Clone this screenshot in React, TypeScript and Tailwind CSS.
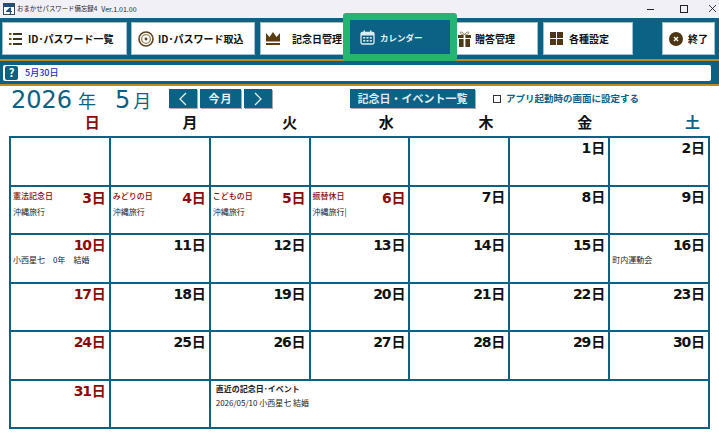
import React from "react";

const JP = { fontFamily: '"Noto Sans CJK JP", sans-serif' };

function ListIcon() {
  return (
    <svg width="13" height="12" viewBox="0 0 13 12">
      <g fill="#6b5220">
        <rect x="0" y="0" width="2.5" height="2" />
        <rect x="0" y="5" width="2.5" height="2" />
        <rect x="0" y="10" width="2.5" height="2" />
      </g>
      <g fill="#3a3420">
        <rect x="4" y="0" width="9" height="2" />
        <rect x="4" y="5" width="9" height="2" />
        <rect x="4" y="10" width="9" height="2" />
      </g>
    </svg>
  );
}
function DiscIcon() {
  return (
    <svg width="16" height="16" viewBox="0 0 16 16" fill="none">
      <circle cx="8" cy="8" r="7" stroke="#5a4320" strokeWidth="1.6" />
      <circle cx="8" cy="8" r="4.4" stroke="#a08a5a" strokeWidth="1.4" />
      <circle cx="8" cy="8" r="1.4" fill="#5a4320" />
    </svg>
  );
}
function CrownIcon() {
  return (
    <svg width="14" height="13" viewBox="0 0 14 13">
      <path d="M0 1 L3.5 5 L7 0 L10.5 5 L14 1 V9.5 H0 Z" fill="#5a3e10" />
      <rect x="0" y="11" width="14" height="2" fill="#5a3e10" />
    </svg>
  );
}
function CalendarIcon() {
  return (
    <svg width="15" height="15" viewBox="0 0 15 15" fill="none">
      <rect x="1" y="2.5" width="13" height="11.5" rx="1.5" stroke="#dcecf2" strokeWidth="1.3" />
      <rect x="1" y="2.5" width="13" height="3" fill="#dcecf2" />
      <rect x="3.5" y="0.5" width="1.5" height="3" fill="#dcecf2" />
      <rect x="10" y="0.5" width="1.5" height="3" fill="#dcecf2" />
      <g fill="#dcecf2">
        <rect x="3.2" y="7" width="2" height="1.6" />
        <rect x="6.5" y="7" width="2" height="1.6" />
        <rect x="9.8" y="7" width="2" height="1.6" />
        <rect x="3.2" y="10" width="2" height="1.6" />
        <rect x="6.5" y="10" width="2" height="1.6" />
        <rect x="9.8" y="10" width="2" height="1.6" />
      </g>
    </svg>
  );
}
function GiftIcon() {
  return (
    <svg width="13" height="16" viewBox="0 0 13 16" fill="none">
      <path d="M6.5 3.5 C4 0 1.5 0.5 2.5 2.5 C3 3.3 5 3.5 6.5 3.5 C8 3.5 10 3.3 10.5 2.5 C11.5 0.5 9 0 6.5 3.5 Z" stroke="#8a7a5a" strokeWidth="0.9" />
      <rect x="0" y="4" width="13" height="3" fill="#4d3a18" />
      <rect x="1" y="8" width="11" height="8" fill="#4d3a18" />
      <rect x="5.6" y="4" width="1.8" height="12" fill="#fff" />
    </svg>
  );
}
function GridIcon() {
  return (
    <svg width="13" height="13" viewBox="0 0 13 13" fill="#4d3614">
      <rect x="0" y="0" width="6" height="6" />
      <rect x="7" y="0" width="6" height="6" />
      <rect x="0" y="7" width="6" height="6" />
      <rect x="7" y="7" width="6" height="6" />
    </svg>
  );
}
function CloseIcon() {
  return (
    <svg width="14" height="14" viewBox="0 0 14 14">
      <circle cx="7" cy="7" r="7" fill="#4d3614" />
      <path d="M5 5 L9 9 M9 5 L5 9" stroke="#fff" strokeWidth="1.4" />
    </svg>
  );
}
function AppIcon() {
  return (
    <svg width="12" height="12" viewBox="0 0 12 12">
      <rect x="0.5" y="0.5" width="11" height="11" fill="#fff" stroke="#33485c" />
      <rect x="1" y="1" width="10" height="3" fill="#1d4f80" />
      <path d="M6.8 4.5 L3 8.2 V9 H6.8 V11 H8 V9 H9 V8 H8 V4.5 Z" fill="#1d4f80" />
    </svg>
  );
}

function ToolButton({ w, ml, pl, gap, icon, label }: { w: string; ml: string; pl: string; gap: string; icon: React.ReactNode; label: string }) {
  return (
    <div className={`${w} ${ml} ${pl} ${gap} h-[33px] flex items-center bg-white border border-[#9fc0cf] text-[10px] text-[#111] font-bold whitespace-nowrap`}>
      {icon}
      <span>{label}</span>
    </div>
  );
}

type Cell = { day?: number; color?: string; holiday?: string; note?: string };

const RED = "text-[#8b0a0a]";
const BLK = "text-[#111]";

const rows: Cell[][] = [
  [{}, {}, {}, {}, {}, { day: 1, color: BLK }, { day: 2, color: BLK }],
  [
    { day: 3, color: RED, holiday: "憲法記念日", note: "沖縄旅行" },
    { day: 4, color: RED, holiday: "みどりの日", note: "沖縄旅行" },
    { day: 5, color: RED, holiday: "こどもの日", note: "沖縄旅行" },
    { day: 6, color: RED, holiday: "振替休日", note: "沖縄旅行|" },
    { day: 7, color: BLK },
    { day: 8, color: BLK },
    { day: 9, color: BLK },
  ],
  [
    { day: 10, color: RED, note: "小西星七　0年　結婚" },
    { day: 11, color: BLK },
    { day: 12, color: BLK },
    { day: 13, color: BLK },
    { day: 14, color: BLK },
    { day: 15, color: BLK },
    { day: 16, color: BLK, note: "町内運動会" },
  ],
  [17, 18, 19, 20, 21, 22, 23].map((d, i) => ({ day: d, color: i === 0 ? RED : BLK })),
  [24, 25, 26, 27, 28, 29, 30].map((d, i) => ({ day: d, color: i === 0 ? RED : BLK })),
];

function DayNumber({ day, color }: { day: number; color: string }) {
  return (
    <div
      className={`text-right pr-[3px] font-bold text-[14px] tracking-[-1.2px] leading-[18px] ${color}`}
      style={{ fontFamily: '"DejaVu Sans", "Noto Sans CJK JP", sans-serif' }}
    >
      {day}
      <span className="text-[14px] tracking-normal ml-[1px]" style={JP}>日</span>
    </div>
  );
}

function DayCell({ cell }: { cell: Cell }) {
  const holidayFirst = !!cell.holiday;
  return (
    <div className="bg-white min-w-0 overflow-hidden">
      {holidayFirst ? (
        <div className="flex items-center justify-between pl-[2px] h-[21px]">
          <span className="text-[8px] font-medium text-[#8b0a0a] whitespace-nowrap -mt-[2px]">{cell.holiday}</span>
          <DayNumber day={cell.day!} color={cell.color!} />
        </div>
      ) : (
        cell.day && <DayNumber day={cell.day} color={cell.color!} />
      )}
      {cell.note && (
        <div className={`pl-[2px] text-[8px] text-[#222] whitespace-nowrap leading-[12px] ${holidayFirst ? "-mt-[2px]" : "mt-0"}`}>{cell.note}</div>
      )}
    </div>
  );
}

export default function App() {
  return (
    <div className="w-[719px] h-[436px] bg-white overflow-hidden relative" style={JP}>
      {/* Title bar */}
      <div className="h-[18px] bg-[#f1f0f6] flex items-center pl-[3px] text-[#222]">
        <AppIcon />
        <span className="ml-[2px] text-[6.4px] whitespace-nowrap">おまかせパスワード備忘録4</span>
        <span className="ml-[4px] text-[7px] whitespace-nowrap">Ver.1.01.00</span>
        <div className="ml-auto flex items-center">
          <svg width="110" height="14" viewBox="0 0 110 14" fill="none" stroke="#222">
            <path d="M38 7.5 H45" strokeWidth="1" />
            <rect x="71.5" y="3.5" width="7" height="7" strokeWidth="1" />
            <path d="M100 3 L107 10 M107 3 L100 10" strokeWidth="0.9" />
          </svg>
        </div>
      </div>

      {/* Toolbar */}
      <div className="h-[41px] bg-[#0b6285] flex items-start pt-[4px] pl-[2px] relative">
        <ToolButton w="w-[125px]" ml="ml-0" pl="pl-[6px]" gap="gap-[6px]" icon={<ListIcon />} label="ID･パスワード一覧" />
        <ToolButton w="w-[124px]" ml="ml-[4px]" pl="pl-[6px]" gap="gap-[4px]" icon={<DiscIcon />} label="ID･パスワード取込" />
        <ToolButton w="w-[90px]" ml="ml-[5px]" pl="pl-[5px]" gap="gap-[12px]" icon={<CrownIcon />} label="記念日管理" />
        <div className="relative z-10 -ml-[7px] -mt-[9px] w-[114px] h-[48px] bg-[#0b6285] border-[7px] border-[#25b573] rounded-[3px] flex items-center pl-[10px] gap-[5px] text-[8.5px] font-bold text-[#e6f2f6] whitespace-nowrap">
          <CalendarIcon />
          <span>カレンダー</span>
        </div>
        <ToolButton w="w-[88px]" ml="-ml-[7px]" pl="pl-[7px]" gap="gap-[4px]" icon={<GiftIcon />} label="贈答管理" />
        <ToolButton w="w-[90px]" ml="ml-[5px]" pl="pl-[6px]" gap="gap-[6px]" icon={<GridIcon />} label="各種設定" />
        <ToolButton w="w-[53px]" ml="ml-[29px]" pl="pl-[6px]" gap="gap-[5px]" icon={<CloseIcon />} label="終了" />
      </div>

      {/* Message bar */}
      <div className="h-[27px] bg-[#0b6285] border-t-2 border-b-2 border-[#c08a1c] flex items-center pl-[3px] pr-[8px]">
        <div className="flex-1 h-[16px] bg-white rounded-[2px] flex items-center">
          <div className="w-[13px] h-[14px] bg-[#0b6285] rounded-[2px] ml-[2px] flex items-center justify-center text-white text-[11px] font-bold leading-none">?</div>
          <span className="ml-[7px] text-[9px] font-medium text-[#2a1ee0]">5月30日</span>
        </div>
      </div>

      {/* Month row */}
      <div className="h-[28px] flex items-center pl-[11px] pb-[3px] text-[#0b6285]">
        <span className="text-[24px] leading-none whitespace-nowrap w-[158px] pt-[2px]" style={{ fontFamily: '"DejaVu Sans", "Noto Sans CJK JP", sans-serif' }}>
          2026<span className="text-[18px] ml-[6px]" style={JP}>年</span>
          <span className="ml-[19px]">5</span><span className="text-[18px] ml-[3px]" style={JP}>月</span>
        </span>
        <div className="flex items-center gap-[3px]">
          <div className="w-[28px] h-[19px] bg-[#0b6285] shadow-[1px_1px_0_#aaa] flex items-center justify-center">
            <svg width="10" height="14" viewBox="0 0 10 14" fill="none" stroke="#e6f2f6" strokeWidth="1.3"><path d="M8 1 L2 7 L8 13" /></svg>
          </div>
          <div className="w-[41px] h-[19px] bg-[#0b6285] shadow-[1px_1px_0_#aaa] flex items-center justify-center text-[11px] text-[#e6f2f6] tracking-[1px] font-bold">今月</div>
          <div className="w-[28px] h-[19px] bg-[#0b6285] shadow-[1px_1px_0_#aaa] flex items-center justify-center">
            <svg width="10" height="14" viewBox="0 0 10 14" fill="none" stroke="#e6f2f6" strokeWidth="1.3"><path d="M2 1 L8 7 L2 13" /></svg>
          </div>
        </div>
        <div className="ml-[78px] w-[125px] h-[19px] bg-[#0b6285] shadow-[1px_1px_0_#aaa] flex items-center justify-center text-[11px] font-bold text-[#dcecf2] whitespace-nowrap">記念日・イベント一覧</div>
        <div className="ml-[18px] w-[8px] h-[8px] border border-[#333] bg-white" />
        <span className="ml-[5px] text-[9.5px] font-bold text-[#0b6285] whitespace-nowrap">アプリ起動時の画面に設定する</span>
      </div>

      {/* Weekdays */}
      <div className="h-[22px] ml-[9px] w-[701px] grid grid-cols-7 text-[15px] font-bold text-right leading-[16px] pr-[10px]">
        <div className="text-[#8b0a0a] pr-[8px]">日</div>
        <div className="text-[#111] pr-[9px]">月</div>
        <div className="text-[#111] pr-[8px]">火</div>
        <div className="text-[#111] pr-[10px]">水</div>
        <div className="text-[#111] pr-[9px]">木</div>
        <div className="text-[#111] pr-[9px]">金</div>
        <div className="text-[#0b6285] pr-[0px]">土</div>
      </div>

      {/* Calendar */}
      <div className="ml-[9px] w-[701px] h-[293px] bg-[#0b6285] border-2 border-[#0b6285] grid grid-cols-7 grid-rows-6 gap-[2px]">
        {rows.flat().map((c, i) => (
          <DayCell key={i} cell={c} />
        ))}
        <DayCell cell={{ day: 31, color: RED }} />
        <div className="bg-white" />
        <div className="bg-white col-span-5 pl-[5px] pt-[2px] text-[#222]">
          <div className="text-[8px] font-bold leading-[12px]">直近の記念日･イベント</div>
          <div className="text-[8px] leading-[12px] mt-[2px]">2026/05/10 小西星七 結婚</div>
        </div>
      </div>
    </div>
  );
}
